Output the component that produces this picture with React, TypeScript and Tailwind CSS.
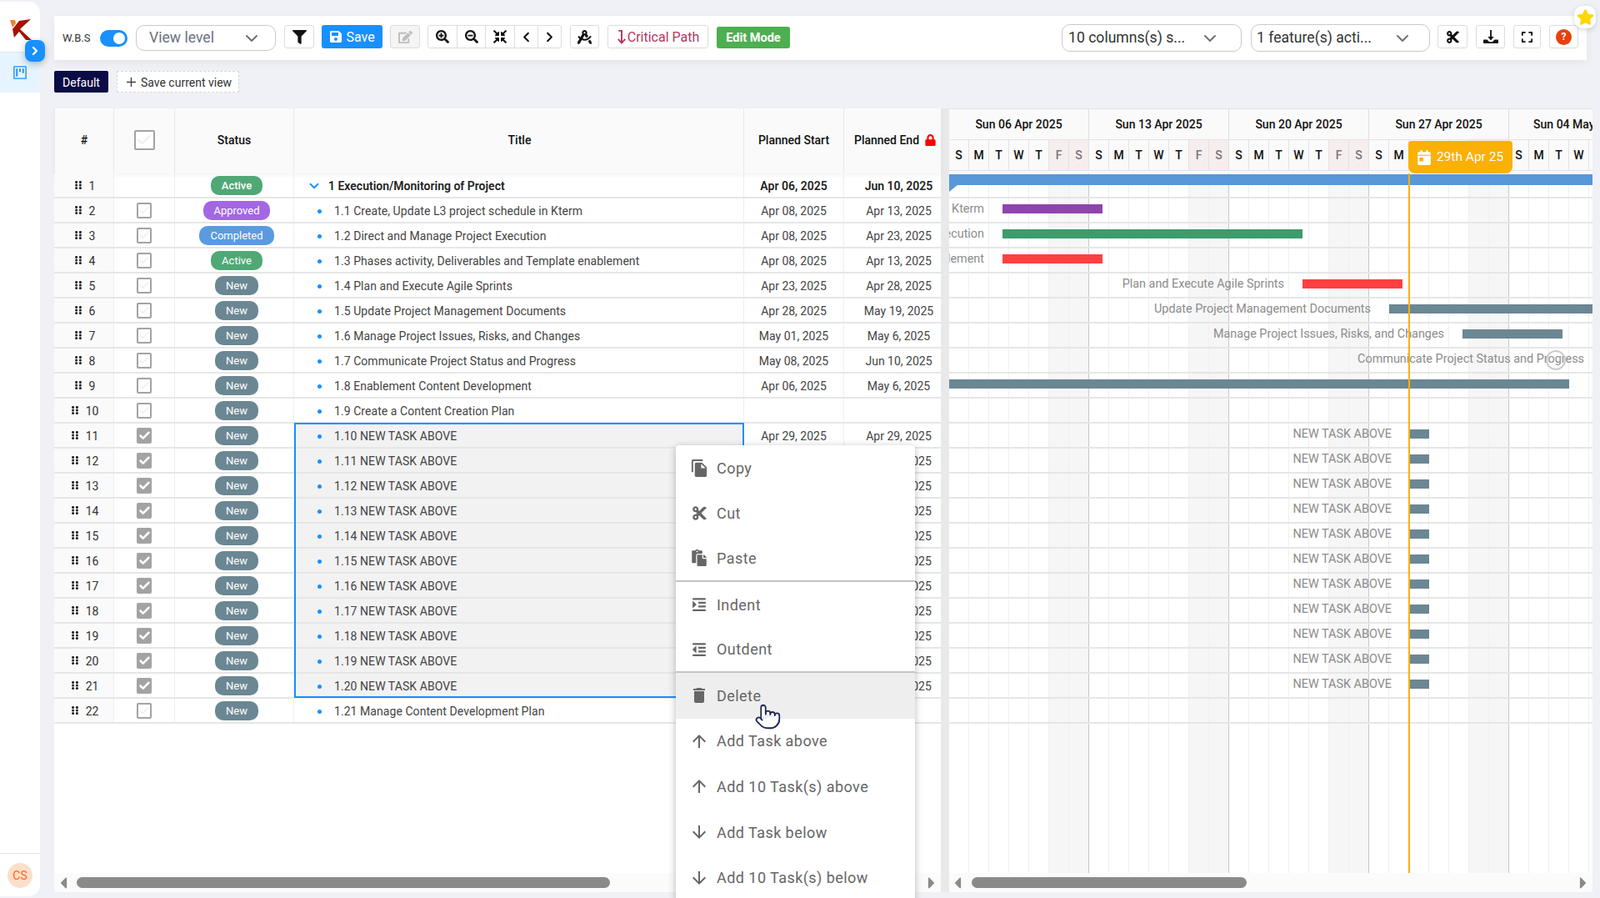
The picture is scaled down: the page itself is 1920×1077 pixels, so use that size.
import { Check, ChevronDown, ChevronLeft, ChevronRight, Plus, Pointer } from 'lucide-react'
import {
  FaCalendarDay,
  FaCaretLeft,
  FaCaretRight,
  FaCompressArrowsAlt,
  FaCut,
  FaDraftingCompass,
  FaEdit,
  FaExpand,
  FaFilter,
  FaIndent,
  FaLock,
  FaOutdent,
  FaPaste,
  FaSave,
  FaSearchMinus,
  FaSearchPlus,
  FaStar,
} from 'react-icons/fa'
import { AiOutlineProject } from 'react-icons/ai'
import { MdArrowDownward, MdArrowUpward, MdDelete, MdFileCopy } from 'react-icons/md'
import type { ReactNode } from 'react'

type Task = {
  id: number
  status: 'Active' | 'Approved' | 'Completed' | 'New'
  title: string
  start?: string
  end?: string
  checked?: boolean
}

const NEW_TASKS: Task[] = Array.from({ length: 11 }, (_, i) => ({
  id: i + 11,
  status: 'New',
  title: `1.${i + 10} NEW TASK ABOVE`,
  start: 'Apr 29, 2025',
  end: 'Apr 29, 2025',
  checked: true,
}))

const TASKS: Task[] = [
  { id: 1, status: 'Active', title: '1 Execution/Monitoring of Project', start: 'Apr 06, 2025', end: 'Jun 10, 2025' },
  { id: 2, status: 'Approved', title: '1.1 Create, Update L3 project schedule in Kterm', start: 'Apr 08, 2025', end: 'Apr 13, 2025' },
  { id: 3, status: 'Completed', title: '1.2 Direct and Manage Project Execution', start: 'Apr 08, 2025', end: 'Apr 23, 2025' },
  { id: 4, status: 'Active', title: '1.3 Phases activity, Deliverables and Template enablement', start: 'Apr 08, 2025', end: 'Apr 13, 2025' },
  { id: 5, status: 'New', title: '1.4 Plan and Execute Agile Sprints', start: 'Apr 23, 2025', end: 'Apr 28, 2025' },
  { id: 6, status: 'New', title: '1.5 Update Project Management Documents', start: 'Apr 28, 2025', end: 'May 19, 2025' },
  { id: 7, status: 'New', title: '1.6 Manage Project Issues, Risks, and Changes', start: 'May 01, 2025', end: 'May 6, 2025' },
  { id: 8, status: 'New', title: '1.7 Communicate Project Status and Progress', start: 'May 08, 2025', end: 'Jun 10, 2025' },
  { id: 9, status: 'New', title: '1.8 Enablement Content Development', start: 'Apr 06, 2025', end: 'May 6, 2025' },
  { id: 10, status: 'New', title: '1.9 Create a Content Creation Plan' },
  ...NEW_TASKS,
  { id: 22, status: 'New', title: '1.21 Manage Content Development Plan' },
]

const PILL: Record<Task['status'], string> = {
  Active: 'bg-[#4fa876] w-[62px]',
  Approved: 'bg-[#a367e3] w-[80px]',
  Completed: 'bg-[#5a9bdf] w-[90px]',
  New: 'bg-[#6b8793] w-[52px]',
}

// gantt bars, offsets are px from the left of the chart
const BARS: { row: number; label?: string; left: number; width: number; color: string }[] = [
  { row: 1, label: 'Create, Update L3 project schedule in Kterm', left: 64, width: 120, color: 'bg-[#8e44ad]' },
  { row: 2, label: 'Direct and Manage Project Execution', left: 64, width: 360, color: 'bg-[#3f9b6c]' },
  { row: 3, label: 'Phases activity, Deliverables and Template enablement', left: 64, width: 120, color: 'bg-[#ff4040]' },
  { row: 4, label: 'Plan and Execute Agile Sprints', left: 424, width: 120, color: 'bg-[#ff4040]' },
  { row: 5, label: 'Update Project Management Documents', left: 528, width: 300, color: 'bg-[#6b8793]' },
  { row: 6, label: 'Manage Project Issues, Risks, and Changes', left: 616, width: 120, color: 'bg-[#6b8793]' },
  { row: 7, label: 'Communicate Project Status and Progress', left: 784, width: 100, color: 'bg-[#6b8793]' },
  { row: 8, left: 0, width: 744, color: 'bg-[#6b8793]' },
  ...Array.from({ length: 11 }, (_, i) => ({
    row: 10 + i,
    label: 'NEW TASK ABOVE',
    left: 553,
    width: 23,
    color: 'bg-[#6b8793]',
  })),
]

const WEEKS = ['Sun 06 Apr 2025', 'Sun 13 Apr 2025', 'Sun 20 Apr 2025', 'Sun 27 Apr 2025', 'Sun 04 May 2025']
const DAY_LETTERS = ['S', 'M', 'T', 'W', 'T', 'F', 'S']
const DAYS = Array.from({ length: 33 }, (_, i) => i)

function ToolButton({ children, className = '' }: { children: ReactNode; className?: string }) {
  return (
    <div className={`h-[28px] flex items-center justify-center rounded-[3px] border border-[#dcdcdc] bg-white text-[#111] ${className}`}>
      {children}
    </div>
  )
}

function ToolSelect({ label, className }: { label: string; className: string }) {
  return (
    <div className={`flex items-center justify-between rounded-[10px] border border-[#c9c9c9] bg-white text-[17.6px] ${className}`}>
      <span className="whitespace-nowrap">{label}</span>
      <ChevronDown className="h-[24px] w-[24px] text-[#6b7280]" strokeWidth={2} />
    </div>
  )
}

function Toolbar() {
  return (
    <div className="h-[53px] flex items-start bg-white pt-[11px] shadow-[0_3px_10px_rgba(0,0,0,0.06)] [font-family:'Open_Sans',sans-serif]">
      <span className="ml-[10px] mt-[6px] w-[35px] text-[13px] text-[#333] whitespace-nowrap">W.B.S</span>
      <div className="ml-[10px] mt-[6px] h-[20px] w-[33px] flex items-center justify-end rounded-full bg-[#1890ff] pr-[3px]">
        <div className="h-[14px] w-[14px] rounded-full bg-white" />
      </div>
      <ToolSelect label="View level" className="ml-[10px] h-[31px] w-[168px] pl-[15px] pr-[16px] text-[#6b7280]" />
      <ToolButton className="ml-[10px] w-[36px]">
        <FaFilter className="h-[17px] w-[17px]" />
      </ToolButton>
      <div className="ml-[9px] h-[28px] w-[73px] flex items-center justify-center gap-[4px] rounded-[3px] bg-[#1890ff] text-[16px] text-white">
        <FaSave className="h-[16px] w-[16px]" />
        <span className="mt-[2px]">Save</span>
      </div>
      <ToolButton className="ml-[9px] w-[36px] !bg-[#f4f4f4] !text-[#bdbdbd]">
        <FaEdit className="h-[17px] w-[17px]" />
      </ToolButton>
      <div className="ml-[9px] h-[28px] w-[161px] flex rounded-[3px] border border-[#dcdcdc] text-[#111]">
        <div className="w-[35px] flex items-center justify-center border-r border-[#dcdcdc]">
          <FaSearchPlus className="h-[16px] w-[16px]" />
        </div>
        <div className="w-[34px] flex items-center justify-center border-r border-[#dcdcdc]">
          <FaSearchMinus className="h-[16px] w-[16px]" />
        </div>
        <div className="w-[35px] flex items-center justify-center border-r border-[#dcdcdc]">
          <FaCompressArrowsAlt className="h-[16px] w-[16px]" />
        </div>
        <div className="w-[28px] flex items-center justify-center border-r border-[#dcdcdc]">
          <ChevronLeft className="h-[19px] w-[19px]" strokeWidth={2.5} />
        </div>
        <div className="flex-1 flex items-center justify-center">
          <ChevronRight className="h-[19px] w-[19px]" strokeWidth={2.5} />
        </div>
      </div>
      <ToolButton className="ml-[10px] w-[35px]">
        <FaDraftingCompass className="h-[17px] w-[17px]" />
      </ToolButton>
      <ToolButton className="ml-[10px] w-[121px] gap-[1px] !text-[#b5365f] text-[16px]">
        <svg viewBox="0 0 12 20" className="h-[19px] w-[12px]" fill="none" stroke="currentColor" strokeWidth="2">
          <path d="M2 2h4v15M1.5 12.5 6 17.5l4.5-5" />
        </svg>
        <span className="mt-[2px] whitespace-nowrap">Critical Path</span>
      </ToolButton>
      <div className="ml-[10px] mt-[2px] h-[26px] w-[88px] flex items-center justify-center rounded-[3px] bg-[#4caf50] pt-[1px] text-[14.5px] font-bold text-white whitespace-nowrap">
        Edit Mode
      </div>
      <ToolSelect label="10 columns(s) s..." className="ml-auto -mt-[1px] h-[33px] w-[216px] pl-[7px] pr-[25px] text-[#333]" />
      <ToolSelect label="1 feature(s) acti..." className="ml-[11px] -mt-[1px] h-[33px] w-[215px] pl-[6px] pr-[20px] text-[#333]" />
      <ToolButton className="ml-[9px] w-[36px]">
        <FaCut className="h-[17px] w-[17px]" />
      </ToolButton>
      <ToolButton className="ml-[10px] w-[35px]">
        <svg viewBox="0 0 20 20" className="h-[18px] w-[18px]" fill="currentColor">
          <path d="M9 1h2v9h3l-4 5-4-5h3z" />
          <path d="M1 14h4l3 3h4l3-3h4q1 0 1 1v3q0 1-1 1H1q-1 0-1-1v-3q0-1 1-1z" />
        </svg>
      </ToolButton>
      <ToolButton className="ml-[10px] w-[33px]">
        <FaExpand className="h-[15px] w-[15px]" />
      </ToolButton>
      <ToolButton className="ml-[10px] mr-[10px] w-[35px]">
        <span className="h-[19px] w-[19px] flex items-center justify-center rounded-full bg-[#e8400c] text-[12px] font-bold text-white">?</span>
      </ToolButton>
    </div>
  )
}

function Checkbox({ checked, large }: { checked?: boolean; large?: boolean }) {
  const size = large ? 'h-[24px] w-[25px]' : 'h-[19px] w-[18px]'
  if (checked) {
    return (
      <div className={`${size} flex items-center justify-center rounded-[2px] bg-[#a3a3a3]`}>
        <Check className="h-[15px] w-[15px] text-white" strokeWidth={4} />
      </div>
    )
  }
  return (
    <div className={`${size} flex items-center justify-center rounded-[2px] border-2 border-[#a3a3a3] bg-white`}>
      <Check className={large ? 'h-[20px] w-[20px] text-[#f0f0f0]' : 'h-[15px] w-[15px] text-[#f0f0f0]'} strokeWidth={3} />
    </div>
  )
}

function DragDots() {
  return (
    <svg viewBox="0 0 8 10" className="h-[10px] w-[8px] fill-[#222]">
      <circle cx="1.6" cy="1.4" r="1.5" />
      <circle cx="6.4" cy="1.4" r="1.5" />
      <circle cx="1.6" cy="5" r="1.5" />
      <circle cx="6.4" cy="5" r="1.5" />
      <circle cx="1.6" cy="8.6" r="1.5" />
      <circle cx="6.4" cy="8.6" r="1.5" />
    </svg>
  )
}

function TableRow({ task }: { task: Task }) {
  const isRoot = task.id === 1
  const selected = task.id >= 11 && task.id <= 21
  return (
    <div className="grid grid-cols-[72px_73px_143px_540px_120px_116px] h-[30px] border-b-2 border-[#e6e6e6] text-[14px] text-[#444]">
      <div className="flex items-center justify-center gap-[9px] pl-[3px] pb-[1px] bg-[#fafafa] border-r border-[#eeeeee] text-[#333]">
        <DragDots />
        <span className="mt-[3px]">{task.id}</span>
      </div>
      <div className="flex items-center justify-center pt-[1px] border-r border-[#eeeeee]">
        {!isRoot && <Checkbox checked={task.checked} />}
      </div>
      <div className="flex items-center justify-center pl-[6px] pt-[1px] border-r border-[#eeeeee]">
        <span className={`h-[23px] flex items-center justify-center rounded-[10px] text-[13px] text-white ${PILL[task.status]} ${isRoot ? 'font-medium' : ''}`}>
          {task.status}
        </span>
      </div>
      <div className={`flex items-center pt-[2px] border-r border-[#eeeeee] ${selected ? 'bg-[#f2f2f2]' : ''}`}>
        {isRoot ? (
          <>
            <ChevronDown className="ml-[15px] h-[18px] w-[18px] text-[#1890ff]" strokeWidth={2.5} />
            <span className="ml-[8px] font-semibold text-[#222]">{task.title}</span>
          </>
        ) : (
          <>
            <span className="ml-[28px] h-[5px] w-[5px] rounded-full bg-[#1890ff]" />
            <span className="ml-[15px] whitespace-nowrap tracking-[0.06px]">{task.title}</span>
          </>
        )}
      </div>
      <div className={`flex items-center justify-center pt-[2px] border-r border-[#eeeeee] ${isRoot ? 'font-semibold text-[#222]' : ''}`}>
        {task.start}
      </div>
      <div className={`flex items-center justify-center pl-[15px] pt-[2px] ${isRoot ? 'font-semibold text-[#222]' : ''}`}>
        {task.end}
      </div>
    </div>
  )
}

function TablePane() {
  return (
    <div className="relative w-[1064px] flex flex-col bg-white">
      <div className="grid grid-cols-[72px_73px_143px_540px_120px_116px] h-[78px] bg-[#fafafa] text-[14px] font-medium text-[#111] shadow-[0_2px_6px_rgba(0,0,0,0.05)]">
        <div className="flex items-center justify-center pb-[2px] border-x border-[#e8e8e8]">#</div>
        <div className="flex items-center justify-center pb-[2px] border-r border-[#e8e8e8]">
          <Checkbox large />
        </div>
        <div className="flex items-center justify-center pb-[2px] border-r border-[#e8e8e8]">Status</div>
        <div className="flex items-center justify-center pl-[2px] pb-[2px] border-r border-[#e8e8e8]">Title</div>
        <div className="flex items-center justify-center pb-[2px] border-r border-[#e8e8e8]">Planned Start</div>
        <div className="flex items-center justify-center gap-[7px] pl-[6px] pb-[2px] whitespace-nowrap">
          Planned End
          <FaLock className="h-[14px] w-[13px] text-[#ff0000]" />
        </div>
      </div>
      {TASKS.map((task) => (
        <TableRow key={task.id} task={task} />
      ))}
      <div className="flex-1" />
      <div className="h-[23px] flex items-center bg-[#fbfbfb] text-[#8a8a8a]">
        <FaCaretLeft className="ml-[3px] h-[22px] w-[16px]" />
        <div className="ml-[8px] h-[13px] w-[640px] rounded-full bg-[#8a8a8a]" />
        <FaCaretRight className="ml-auto mr-[3px] h-[22px] w-[16px]" />
      </div>
      {/* selected range */}
      <div className="absolute left-[288px] top-[377px] h-[330px] w-[540px] border-2 border-[#1890ff]" />
    </div>
  )
}

function GanttPane() {
  return (
    <div className="relative w-[772px] flex flex-col overflow-hidden bg-white">
      <div className="h-[38px] flex bg-[#fafafa] border-y border-[#e4e4e4] text-[14px] font-medium text-[#111]">
        {WEEKS.map((w) => (
          <div key={w} className="w-[168px] shrink-0 flex items-center justify-center border-r border-[#dddddd] whitespace-nowrap">
            {w}
          </div>
        ))}
      </div>
      <div className="h-[40px] flex bg-[#fafafa] pb-[3px] text-[14px] font-medium text-[#111]">
        {DAYS.map((d) => {
          const weekend = d % 7 >= 5
          // days 23-27 sit under the today badge
          const hidden = d >= 23 && d <= 27
          return (
            <div
              key={d}
              className={`w-[24px] shrink-0 flex items-center justify-center border-r border-b border-[#e2e2e2] ${weekend ? 'bg-[#f6eeee] text-[#777]' : ''}`}
            >
              {hidden ? '' : DAY_LETTERS[d % 7]}
            </div>
          )
        })}
      </div>
      <div className="relative flex-1">
        {/* day columns */}
        <div className="absolute inset-0 flex">
          {DAYS.map((d) => {
            const weekend = d % 7 >= 5
            const weekEnd = d % 7 === 6
            return (
              <div
                key={d}
                className={`w-[24px] shrink-0 border-r ${weekEnd ? 'border-[#c8c8c8]' : 'border-[#f0f0f0]'} ${weekend ? 'bg-[#f6f6f6]' : ''}`}
              />
            )
          })}
        </div>
        {/* rows */}
        <div className="relative flex flex-col">
          {TASKS.map((t) => (
            <div key={t.id} className="relative h-[30px] border-b-2 border-[#e6e6e6]" />
          ))}
        </div>
        {/* summary bar */}
        <div className="absolute left-0 right-0 top-[1px] h-[13px] bg-[#5898d8]" />
        <svg viewBox="0 0 10 8" className="absolute left-0 top-[14px] h-[8px] w-[10px] fill-[#5898d8]">
          <polygon points="0,0 10,0 0,8" />
        </svg>
        {BARS.map((b) => (
          <div key={b.row}>
            {b.label && (
              <span
                className="absolute h-[20px] leading-[20px] text-[14.4px] text-[#8c8c8c] whitespace-nowrap"
                style={{ top: b.row * 30 + 3, right: 772 - b.left + 22 }}
              >
                {b.label}
              </span>
            )}
            <div className={`absolute h-[11px] ${b.color}`} style={{ top: b.row * 30 + 7, left: b.left, width: b.width }} />
          </div>
        ))}
        {/* progress ring */}
        <div className="absolute left-[716px] top-[212px] h-[24px] w-[24px] rounded-full border-2 border-[#cccccc]" />
        {/* today */}
        <div className="absolute left-[551px] top-0 bottom-0 w-[2px] bg-[#fbb005]" />
      </div>
      <div className="h-[23px] flex items-center bg-[#fbfbfb] text-[#8a8a8a]">
        <FaCaretLeft className="ml-[2px] h-[22px] w-[16px]" />
        <div className="ml-[9px] h-[13px] w-[330px] rounded-full bg-[#8a8a8a]" />
        <FaCaretRight className="ml-auto mr-[3px] h-[22px] w-[16px]" />
      </div>
      <div className="absolute left-[551px] top-[39px] h-[39px] w-[125px] flex items-center justify-center gap-[7px] rounded-t-[4px] rounded-b-[8px] bg-[#fbb005] text-[15.5px] text-white whitespace-nowrap">
        <FaCalendarDay className="h-[18px] w-[16px]" />
        29th Apr 25
      </div>
    </div>
  )
}

const MENU: { label: string; icon: ReactNode; divider?: boolean; hover?: boolean }[] = [
  { label: 'Copy', icon: <MdFileCopy className="h-[23px] w-[23px]" /> },
  { label: 'Cut', icon: <FaCut className="h-[19px] w-[19px]" /> },
  { label: 'Paste', icon: <FaPaste className="h-[20px] w-[20px]" />, divider: true },
  { label: 'Indent', icon: <FaIndent className="h-[18px] w-[18px]" /> },
  { label: 'Outdent', icon: <FaOutdent className="h-[18px] w-[18px]" />, divider: true },
  { label: 'Delete', icon: <MdDelete className="h-[28px] w-[28px]" />, hover: true },
  { label: 'Add Task above', icon: <MdArrowUpward className="h-[26px] w-[26px]" /> },
  { label: 'Add 10 Task(s) above', icon: <MdArrowUpward className="h-[26px] w-[26px]" /> },
  { label: 'Add Task below', icon: <MdArrowDownward className="h-[26px] w-[26px]" /> },
  { label: 'Add 10 Task(s) below', icon: <MdArrowDownward className="h-[26px] w-[26px]" /> },
]

function ContextMenu() {
  return (
    <div className="absolute left-[811px] top-[534px] w-[287px] rounded-[4px] bg-white text-[18px] tracking-[0.45px] text-[#666] shadow-[0_2px_10px_rgba(0,0,0,0.28)]">
      {MENU.map((m) => (
        <div
          key={m.label}
          className={`h-[54.6px] flex items-center ${m.divider ? 'border-b-2 border-[#c4c4c4]' : ''} ${m.hover ? 'bg-[#eeeeee]' : ''}`}
        >
          <span className="ml-[16px] h-[28px] w-[24px] flex items-center justify-center">{m.icon}</span>
          <span className="ml-[9px] whitespace-nowrap">{m.label}</span>
        </div>
      ))}
    </div>
  )
}

export default function App() {
  return (
    <div className="relative h-[1077px] w-[1920px] flex overflow-hidden bg-[#eff1f6] [font-family:Roboto,sans-serif]">
      <aside className="mt-[2px] mb-[2px] w-[48px] flex flex-col rounded-r-[14px] bg-white">
        <div className="h-[60px] flex items-start pl-[12px] pt-[21px]">
          <svg viewBox="0 0 26 26" className="h-[26px] w-[26px]">
            <path d="M25 0 11 2 3 12l2 10 6-7 8 10h7L12 12z" fill="#a51208" />
            <path d="M0 1h6l1 4-4 5z" fill="#f08030" />
          </svg>
        </div>
        <div className="h-[49px] flex items-center justify-center border-t border-[#dfe8ee] bg-[#e6f4ff]">
          <AiOutlineProject className="h-[20px] w-[20px] text-[#1890ff]" />
        </div>
        <div className="flex-1" />
        <div className="h-[52px] flex items-start justify-center border-t border-[#e6e6e6] pt-[11px]">
          <div className="h-[30px] w-[30px] flex items-center justify-center rounded-full bg-[#fddfc9] text-[14px] text-[#fa6a14]">CS</div>
        </div>
      </aside>

      <main className="ml-[17px] w-[1846px] flex flex-col pt-[19px]">
        <div className="w-[1839px]">
          <Toolbar />
        </div>
        <div className="mt-[13px] h-[26px] flex items-stretch gap-[10px] text-[14px] [font-family:'Open_Sans',sans-serif]">
          <div className="w-[65px] flex items-center justify-center pt-[3px] rounded-[2px] bg-[#0b0b45] text-white">Default</div>
          <div className="w-[147px] flex items-center justify-center gap-[3px] pt-[3px] border border-dashed border-[#d6d6d6] bg-white text-[#333] whitespace-nowrap">
            <Plus className="-mt-[2px] h-[17px] w-[17px] text-[#444]" strokeWidth={2} />
            Save current view
          </div>
        </div>
        <div className="mt-[19px] h-[940px] flex">
          <TablePane />
          <div className="w-[10px] bg-[#e9e9e9]" />
          <GanttPane />
        </div>
      </main>

      {/* sidebar toggle */}
      <div className="absolute left-[30px] top-[48px] h-[26px] w-[24px] flex items-center justify-center rounded-[8px] bg-[#1890ff] shadow-[0_3px_8px_rgba(0,0,0,0.25)]">
        <ChevronRight className="h-[16px] w-[16px] text-white" strokeWidth={3.5} />
      </div>
      {/* favourite */}
      <div className="absolute left-[1889px] top-[7px] h-[27px] w-[26px] flex items-center justify-center rounded-[10px] bg-white shadow-[0_2px_6px_rgba(0,0,0,0.15)]">
        <FaStar className="h-[21px] w-[21px] text-[#ffd700]" />
      </div>
      <ContextMenu />
      <Pointer className="absolute left-[905px] top-[843px] h-[33px] w-[33px] fill-white text-[#1e2a52]" strokeWidth={1.3} />
    </div>
  )
}
